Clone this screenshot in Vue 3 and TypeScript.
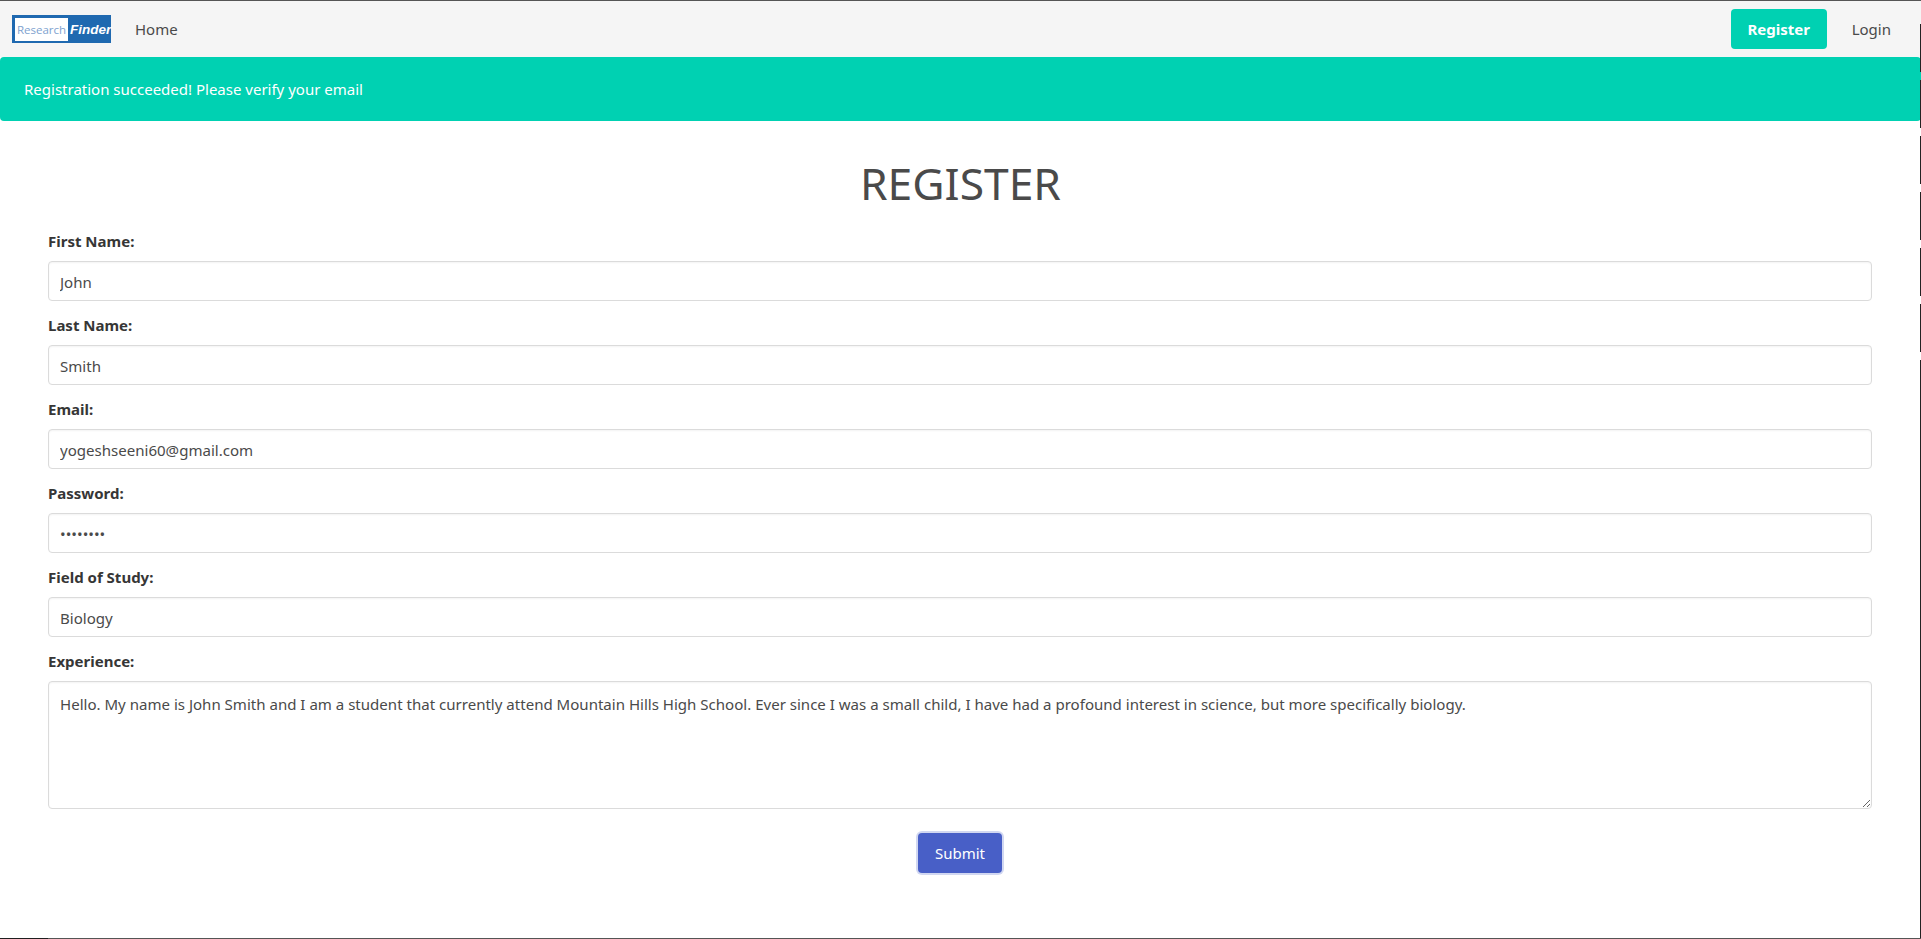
<script setup lang="ts">
import { ref } from 'vue'

interface Field {
  label: string
  type: string
  value: string
}

const fields = ref<Field[]>([
  { label: 'First Name:', type: 'text', value: 'John' },
  { label: 'Last Name:', type: 'text', value: 'Smith' },
  { label: 'Email:', type: 'email', value: 'yogeshseeni60@gmail.com' },
  { label: 'Password:', type: 'password', value: 'password' },
  { label: 'Field of Study:', type: 'text', value: 'Biology' },
])
const experience = ref(
  'Hello. My name is John Smith and I am a student that currently attend Mountain Hills High School. Ever since I was a small child, I have had a profound interest in science, but more specifically biology.',
)
</script>

<template>
  <div class="page">
    <nav class="navbar">
      <div class="logo">
        <span class="logo-box">Research</span>
        <span class="logo-finder">Finder</span>
      </div>
      <a class="nav-link home">Home</a>
      <div class="spacer"></div>
      <a class="register">Register</a>
      <a class="nav-link login">Login</a>
    </nav>
    <div class="notification">Registration succeeded! Please verify your email</div>
    <h1 class="title">REGISTER</h1>
    <form class="form" @submit.prevent>
      <div v-for="f in fields" :key="f.label" class="field">
        <label class="label">{{ f.label }}</label>
        <input class="input" :type="f.type" :value="f.value" autocomplete="off" />
      </div>
      <div class="field">
        <label class="label">Experience:</label>
        <textarea class="input textarea" :value="experience"></textarea>
      </div>
      <div class="actions">
        <button class="submit" type="submit">Submit</button>
      </div>
    </form>
    <div class="edge-right"></div>
    <div class="edge-dashes"></div>
    <div class="edge-bottom"></div>
    <div class="edge-top"></div>
  </div>
</template>

<style>
html,
body {
  margin: 0;
  background: #fff;
  overflow: hidden;
}
</style>

<style scoped>
.page {
  position: relative;
  width: 1921px;
  height: 939px;
  box-sizing: border-box;
  padding-top: 1px;
  font-family: "Noto Sans", "Open Sans", sans-serif;
  font-size: 15px;
  color: #4a4a4a;
  overflow: hidden;
}
.navbar {
  height: 56px;
  background: #f5f5f5;
  display: flex;
  align-items: center;
  padding: 0 30px 0 12px;
}
.logo {
  width: 99px;
  height: 28px;
  background: #1f69b0;
  display: flex;
  align-items: center;
  box-sizing: border-box;
  padding: 0 0 0 3px;
}
.logo-box {
  width: 53px;
  height: 23px;
  background: #fff;
  color: #7ea2cf;
  font-family: "Open Sans", sans-serif;
  font-size: 11.5px;
  line-height: 23px;
  text-align: center;
  flex: none;
}
.logo-finder {
  color: #fff;
  font-family: "Liberation Sans", sans-serif;
  font-weight: 700;
  font-style: italic;
  font-size: 13.5px;
  margin-left: 2px;
  white-space: nowrap;
}
.nav-link {
  color: #4a4a4a;
}
.home {
  margin-left: 24px;
}
.spacer {
  flex: 1;
}
.register {
  width: 96px;
  height: 40px;
  border-radius: 4px;
  background: #00d1b2;
  color: #fff;
  font-weight: 700;
  display: flex;
  align-items: center;
  justify-content: center;
}
.login {
  margin-left: 25px;
}
.notification {
  height: 64px;
  box-sizing: border-box;
  background: #00d1b2;
  color: #fff;
  border-radius: 4px;
  padding: 0 24px;
  display: flex;
  align-items: center;
}
.title {
  margin: 31px 0 0;
  height: 62px;
  font-size: 44.4px;
  line-height: 62px;
  font-weight: 400;
  text-align: center;
  color: #4a4a4a;
}
.form {
  padding: 0 49px 0 48px;
  margin-top: 15px;
}
.field {
  margin-bottom: 12px;
}
.label {
  display: block;
  color: #363636;
  font-weight: 700;
  height: 24px;
  line-height: 24px;
  margin-bottom: 8px;
}
.input {
  display: block;
  width: 100%;
  height: 40px;
  box-sizing: border-box;
  border: 1px solid #dbdbdb;
  border-radius: 4px;
  background: #fff;
  color: #4a4a4a;
  font-family: inherit;
  font-size: 15.06px;
  padding: 1px 11px 0;
  box-shadow: inset 0 1px 2px rgba(10, 10, 10, 0.05);
  outline: none;
}
.textarea {
  height: 128px;
  padding: 10px 11px 8px;
  line-height: 24px;
}
.actions {
  display: flex;
  justify-content: center;
  padding-top: 12px;
}
.submit {
  width: 84px;
  height: 40px;
  border: 1px solid transparent;
  border-radius: 4px;
  background: #485fc7;
  color: #fff;
  font-family: inherit;
  font-size: 15px;
  box-shadow: 0 0 0 2px rgba(72, 95, 199, 0.25);
}
.edge-top {
  position: absolute;
  left: 0;
  top: 0;
  width: 100%;
  height: 1px;
  background: #555;
}
.edge-bottom {
  position: absolute;
  left: 0;
  bottom: 0;
  width: 100%;
  height: 1px;
  background: linear-gradient(to right, #1f1f1f 48px, #555 48px);
}
.edge-right {
  position: absolute;
  right: 0;
  top: 402px;
  width: 1px;
  height: 537px;
  background: #222;
}
.edge-dashes {
  position: absolute;
  right: 0;
  top: 24px;
  width: 1px;
  height: 378px;
  background: repeating-linear-gradient(to bottom, #222 0 48px, transparent 48px 56px);
}
</style>
